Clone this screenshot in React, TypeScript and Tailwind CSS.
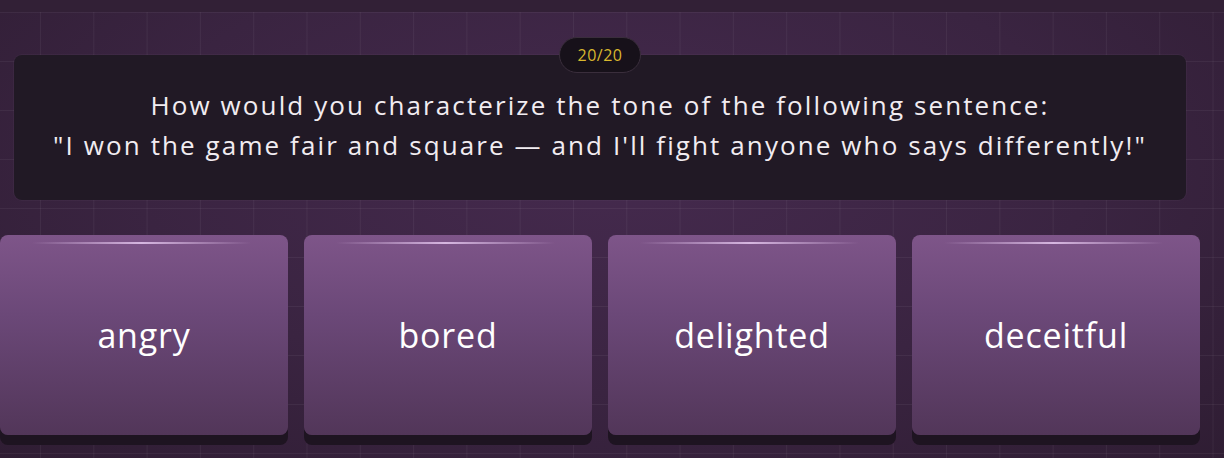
const options = ["angry", "bored", "delighted", "deceitful"];

const App = () => {
  return (
    <div className="h-[458px] w-[1224px] overflow-hidden bg-[#34223a] font-['Open_Sans','Noto_Sans',sans-serif]">
      <div className="h-3 w-full bg-[#322036]" />
      <div className="h-[446px] w-full bg-[radial-gradient(ellipse_at_50%_35%,#452a4e_0%,#3a2441_55%,#2f1d33_100%)]">
        <div className="h-full w-full bg-[linear-gradient(to_right,rgba(255,255,255,0.05)_1px,transparent_1px),linear-gradient(to_bottom,rgba(255,255,255,0.05)_1px,transparent_1px)] bg-[size:53.3px_49px] bg-[position:40px_0px]">
          <div className="w-[1200px] pt-[43px]">
            <div className="relative mx-[14px] flex h-[145px] flex-col items-center justify-center rounded-lg bg-[#211925] shadow-[0_0_0_1px_rgba(255,255,255,0.03)]">
              <div className="absolute -top-[18px] left-1/2 flex h-[36px] w-[82px] -translate-x-1/2 items-center justify-center rounded-full border border-[#3a2e3c] bg-[#17111a] text-[16px] tracking-[0.5px] text-[#d9b82e]">
                20/20
              </div>
              <p className="pb-[6px] text-center text-[26px] leading-[40px] font-medium tracking-[2.1px] text-[#f1ecf1]">
                How would you characterize the tone of the following sentence:
                <br />
                "I won the game fair and square — and I'll fight anyone who says differently!"
              </p>
            </div>
            <div className="mt-[35px] grid grid-cols-4 gap-4">
              {options.map((o) => (
                <button
                  key={o}
                  className="relative flex h-[200px] items-center justify-center rounded-lg bg-[linear-gradient(to_bottom,#7e5589_0%,#6b4878_40%,#523659_100%)] text-[34px] font-medium tracking-[0.8px] text-white shadow-[0_10px_0_#1e1421]"
                >
                  <div className="absolute top-[7px] left-[11%] h-[2px] w-[76%] bg-[linear-gradient(to_right,transparent,rgba(230,200,240,0.85),transparent)]" />
                  {o}
                </button>
              ))}
            </div>
          </div>
        </div>
      </div>
    </div>
  );
};

export default App;
